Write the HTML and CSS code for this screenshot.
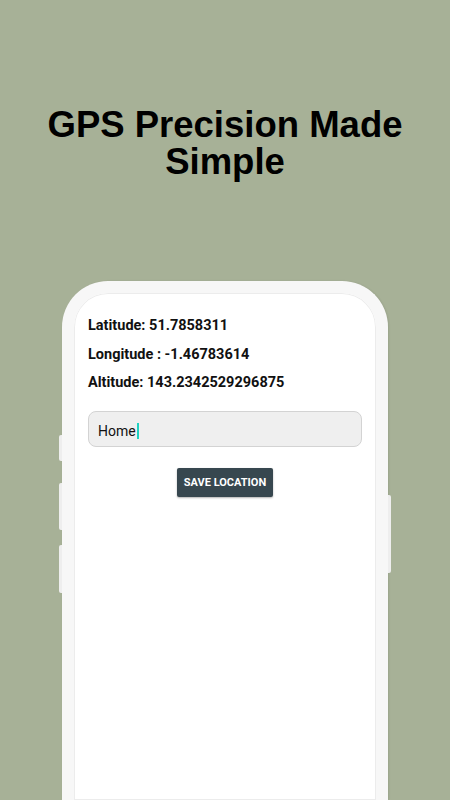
FILE: index.html
```html
<!DOCTYPE html>
<html lang="en">
<head>
    <meta charset="UTF-8">
    <meta name="viewport" content="width=device-width, initial-scale=1.0">
    <title>GPS Precision Made Simple</title>
    <link rel="stylesheet" href="styles.css">
</head>
<body>

<h1 class="headline">GPS Precision Made Simple</h1>

<div class="phone">
    <span class="side-btn left b1"></span>
    <span class="side-btn left b2"></span>
    <span class="side-btn left b3"></span>
    <span class="side-btn right b4"></span>

    <div class="screen">
        <p class="reading">Latitude: 51.7858311</p>
        <p class="reading">Longitude : -1.46783614</p>
        <p class="reading">Altitude: 143.2342529296875</p>

        <div class="name-field">
            <span class="name-text">Home</span><span class="caret"></span>
        </div>

        <div class="actions">
            <button class="save-btn">Save location</button>
        </div>
    </div>
</div>

</body>
</html>
```

FILE: styles.css
```css
body {
    margin: 0;
    height: 800px;
    overflow: hidden;
    background-color: #a7b197;
    font-family: Roboto, "Liberation Sans", sans-serif;
}

.headline {
    margin: 106px 0 0;
    font-family: "Liberation Sans", Arial, sans-serif;
    font-size: 36.5px;
    line-height: 37px;
    font-weight: bold;
    text-align: center;
    color: #000;
}

.phone {
    position: relative;
    width: 302px;
    height: 507px;
    margin: 101px 0 0 62px;
    border: 12px solid #f7f7f7;
    border-bottom: none;
    border-radius: 46px 46px 0 0;
    background: #fff;
    box-shadow: inset 0 0 0 1px #ececec, 1px 0 2px rgba(0, 0, 0, 0.08);
}

/* little buttons on the edge of the phone */
.side-btn {
    position: absolute;
    width: 3px;
    background: #eeeeee;
}

.side-btn.left {
    left: -15px;
    border-radius: 2px 0 0 2px;
}

.side-btn.right {
    right: -15px;
    border-radius: 0 2px 2px 0;
}

.b1 { top: 142px; height: 26px; }
.b2 { top: 190px; height: 47px; }
.b3 { top: 252px; height: 48px; }
.b4 { top: 202px; height: 78px; }

.screen {
    padding: 24px 14px 0 14px;
}

.reading {
    margin: 0 0 10.5px;
    font-size: 14.5px;
    line-height: 18px;
    font-weight: bold;
    color: #111;
}

.name-field {
    display: flex;
    align-items: center;
    box-sizing: border-box;
    height: 36px;
    margin-top: 19px;
    padding: 3px 9px 0;
    background: #efefef;
    border: 1px solid #d3d3d3;
    border-radius: 8px;
    font-size: 14px;
    color: #111;
}

.caret {
    width: 2px;
    height: 16px;
    margin-left: 1px;
    background: #1fd1c1;
}

.actions {
    display: flex;
    justify-content: center;
    margin-top: 21px;
}

.save-btn {
    padding: 0 7px;
    height: 29px;
    border: none;
    border-radius: 2px;
    background: #37474f;
    color: #fff;
    font-family: Roboto, "Liberation Sans", sans-serif;
    font-size: 11px;
    font-weight: bold;
    text-transform: uppercase;
    box-shadow: 0 1px 2px rgba(0, 0, 0, 0.3);
}
```
